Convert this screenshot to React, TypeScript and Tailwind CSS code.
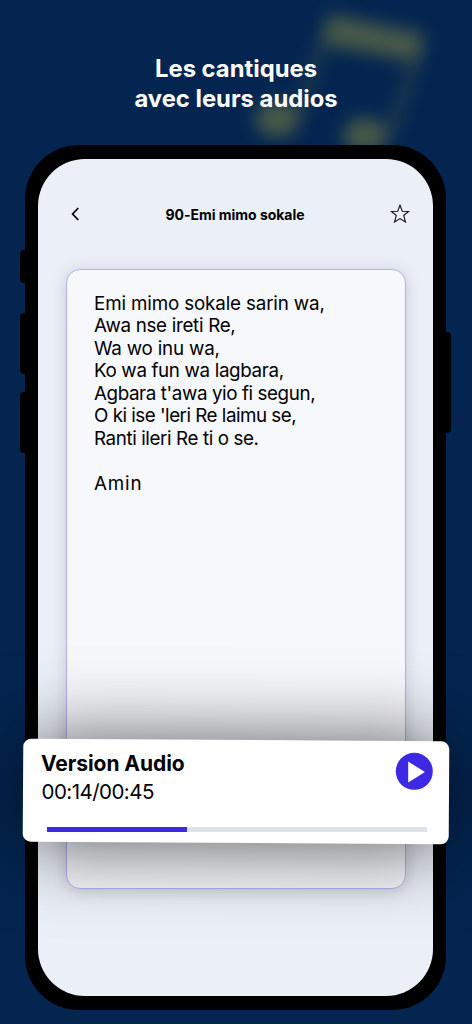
const lyrics = [
  { text: "Emi mimo sokale sarin wa,", tracking: "tracking-[-0.15px]" },
  { text: "Awa nse ireti Re,", tracking: "tracking-[-0.3px]" },
  { text: "Wa wo inu wa,", tracking: "tracking-[-0.2px]" },
  { text: "Ko wa fun wa lagbara,", tracking: "tracking-[-0.35px]" },
  { text: "Agbara t'awa yio fi segun,", tracking: "tracking-[-0.4px]" },
  { text: "O ki ise 'leri Re laimu se,", tracking: "tracking-[-0.5px]" },
  { text: "Ranti ileri Re ti o se.", tracking: "tracking-[-0.4px]" },
  { text: "", tracking: "tracking-normal" },
  { text: "Amin", tracking: "tracking-[0.85px]" },
];

function MusicNote() {
  return (
    <svg
      viewBox="0 0 240 180"
      className="absolute right-3 top-0.5 h-[180px] w-[240px] overflow-visible blur-[9px]"
      fill="none"
      aria-hidden="true"
    >
      <g fill="#d9c93c" opacity="0.33">
        <path d="M108 12 L205 32 L198 60 L101 42 Z" />
        <ellipse cx="57" cy="117" rx="22" ry="18" />
        <ellipse cx="145" cy="134" rx="22" ry="18" />
      </g>
      <g stroke="#d9c93c" strokeWidth="9" opacity="0.18">
        <path d="M101 44 L78 116" />
        <path d="M195 60 L170 134" />
      </g>
    </svg>
  );
}

function PhoneButtons() {
  return (
    <div className="absolute inset-y-0 -inset-x-[5px] flex justify-between">
      <div className="flex flex-col pt-[105px]">
        <div className="h-[33px] w-3 rounded bg-black" />
        <div className="mt-[30px] h-[61px] w-3 rounded bg-black" />
        <div className="mt-[18px] h-[61px] w-3 rounded bg-black" />
      </div>
      <div className="pt-[187px]">
        <div className="h-[101px] w-3 rounded bg-black" />
      </div>
    </div>
  );
}

function TopBar() {
  return (
    <header className="flex h-[110px] items-center justify-between pl-8 pr-[23px]">
      <svg viewBox="0 0 10 14" className="mb-px h-[14px] w-[10px]" fill="none" aria-label="Retour">
        <path d="M8.3 1 L2.6 7 L8.3 13" stroke="#000" strokeWidth="1.7" />
      </svg>
      <h2 className="text-[14px] font-bold tracking-[-0.02px] text-black">
        90-Emi mimo sokale
      </h2>
      <svg viewBox="0 0 20 20" className="h-5 w-5" fill="none" aria-label="Favori">
        <path
          d="M10 1.2 L12.3 7.2 L18.6 7.5 L13.7 11.5 L15.5 18 L10 14.6 L4.5 18 L6.3 11.5 L1.4 7.5 L7.7 7.2 Z"
          stroke="#111"
          strokeWidth="1.1"
        />
      </svg>
    </header>
  );
}

function AudioPlayer() {
  return (
    <section className="absolute left-[23px] top-[740px] h-[103px] w-[426px]">
      <div className="absolute inset-0 rotate-[0.35deg] rounded-lg bg-white shadow-[0_2px_80px_rgba(0,0,0,0.66)]" />
      <div className="relative flex justify-between pl-[18px] pr-4 pt-[10px] text-black">
        <div>
          <h3 className="text-[21px] font-bold leading-[28px] tracking-[-0.06px]">
            Version Audio
          </h3>
          <p className="pl-[0.5px] text-[20.5px] leading-[28px] tracking-[-0.53px]">
            00:14/00:45
          </p>
        </div>
        <svg viewBox="0 0 38 38" className="mt-[2px] h-[38px] w-[38px]" aria-label="Lecture">
          <circle cx="19.3" cy="19.3" r="18.5" fill="#3d29e3" />
          <path d="M13.2 9.6 L30 20 L13.2 30.5 Z" fill="#fff" />
        </svg>
      </div>
      <div className="relative ml-[23.5px] mt-[21px] h-[5px] w-[380px] bg-[#e0e2e9]">
        <div className="h-[4.5px] bg-[#3d29e3]" style={{ width: `${(14 / 38) * 100}%` }} />
      </div>
    </section>
  );
}

export default function App() {
  return (
    <main className="relative h-[1024px] w-[472px] overflow-hidden bg-[#032550] font-['Inter',sans-serif]">
      <MusicNote />

      <h1 className="relative flex h-[145px] flex-col items-center pt-[54px] text-[23.8px] font-bold leading-[29.5px] text-white">
        <span>Les cantiques</span>
        <span>avec leurs audios</span>
      </h1>

      <div className="relative ml-[25px] h-[865px] w-[421px] rounded-[54px] bg-black px-[13px] py-[14px]">
        <PhoneButtons />
        <div className="relative h-full overflow-hidden rounded-[47px] bg-[#ebf0f8]">
          <TopBar />
          <article className="ml-7 mr-[27px] h-[620px] rounded-[14px] border border-[#b3b0f0] bg-[#f7f8fc] pl-[27px] pt-[22.6px] shadow-[0_2px_16px_rgba(0,0,0,0.16)]">
            {lyrics.map((line, index) => (
              <p
                key={index}
                className={`h-[22.5px] whitespace-nowrap text-[18.8px] leading-[22.5px] text-black ${line.tracking}`}
              >
                {line.text}
              </p>
            ))}
          </article>
        </div>
      </div>

      <AudioPlayer />
    </main>
  );
}
